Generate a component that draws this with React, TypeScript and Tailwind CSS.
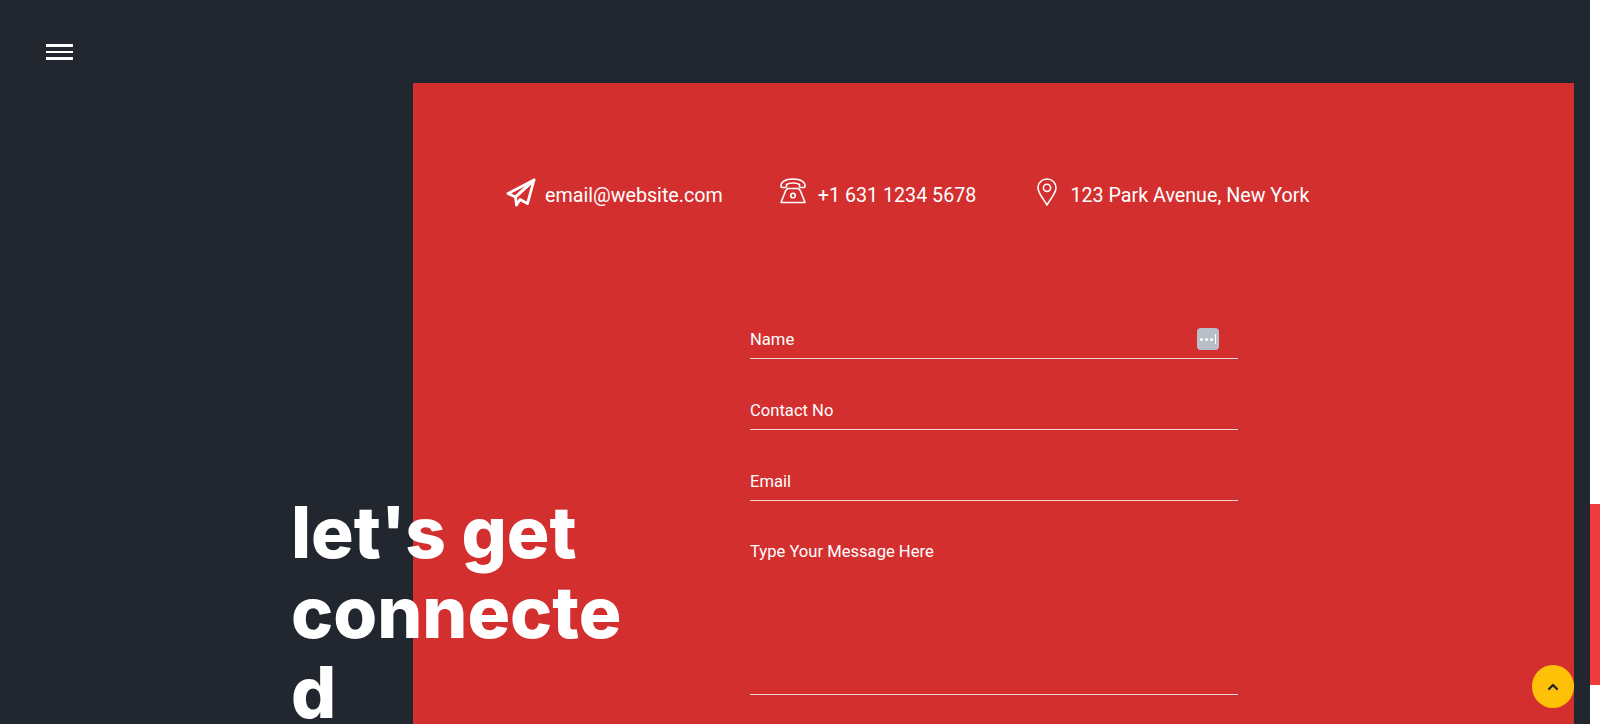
import { ChevronUp } from "lucide-react";

function PlaneIcon() {
  return (
    <svg width="30" height="30" viewBox="0 0 30 30" fill="none" stroke="white" strokeWidth="2.8" strokeLinejoin="round" strokeLinecap="round">
      <path d="M28 2 2 15.500l7.500 3.500L28 2Z" />
      <path d="M28 2 9.500 19l1 8 3.500-5.500 7.500 4L28 2Z" />
    </svg>
  );
}

function PhoneIcon() {
  return (
    <svg width="28" height="26" viewBox="0 0 28 26" fill="none" stroke="white" strokeWidth="1.6" strokeLinejoin="round">
      <path d="M2 8.500C1.500 4 6 1 14 1s12.500 3 12 7.500c0 .8-.6 1-1.200 1h-3.300c-.6 0-1-.4-1-1V6.500c-1.500-1-3.800-1.500-6.500-1.500s-5 .5-6.500 1.500v2c0 .6-.4 1-1 1H3.200C2.600 9.500 2 9.300 2 8.500Z" />
      <path d="M8.500 10.500h11l2 2.500 4.500 11.500H2L6.500 13l2-2.500Z" />
      <circle cx="14" cy="17.500" r="2.300" />
    </svg>
  );
}

function PinIcon() {
  return (
    <svg width="20" height="28" viewBox="0 0 20 28" fill="none" stroke="white" strokeWidth="1.6" strokeLinejoin="round">
      <path d="M10 27C6.500 20.500 1 15.500 1 9.800 1 4.800 5 1 10 1s9 3.800 9 8.800C19 15.500 13.500 20.500 10 27Z" />
      <circle cx="10" cy="9.800" r="3.600" />
    </svg>
  );
}

function ContactItem({ icon, text, gap }: { icon: React.ReactNode; text: string; gap: string }) {
  return (
    <div className={`flex items-start ${gap}`}>
      {icon}
      <span className="pt-[3px] text-[19.700px] leading-[30px] text-white">{text}</span>
    </div>
  );
}

function Field({ label, showKey }: { label: string; showKey?: boolean }) {
  return (
    <div className="relative mb-[27px] border-b border-white/80">
      <input
        placeholder={label}
        className="h-[43px] w-full bg-transparent pt-[5px] text-[16.600px] text-white outline-none placeholder:text-white"
      />
      {showKey && (
        <span className="absolute right-[19px] top-[13px] flex h-[22px] w-[22px] items-center justify-center gap-[2px] rounded-[4px] bg-[#b8bfc9]">
          <i className="h-[3px] w-[3px] rounded-full bg-white" />
          <i className="h-[3px] w-[3px] rounded-full bg-white" />
          <i className="h-[3px] w-[3px] rounded-full bg-white" />
          <i className="h-[10px] w-[1px] bg-white" />
        </span>
      )}
    </div>
  );
}

export default function App() {
  return (
    <div className="relative flex h-[724px] overflow-hidden bg-white font-['Roboto',sans-serif]">
      <div className="min-w-0 flex-1 bg-[#22262e] pt-[44px]">
        <button className="ml-[46px] flex w-[27px] flex-col gap-[4px]">
          <span className="h-[3px] bg-white" />
          <span className="h-[2px] bg-white" />
          <span className="h-[3px] bg-white" />
        </button>

        <section className="ml-[413px] mr-[16px] mt-[23px] h-[800px] bg-[#d32f2f] pt-[95px]">
          <div className="flex pl-[93px]">
            <ContactItem icon={<PlaneIcon />} text="email@website.com" gap="gap-[9px]" />
            <div className="ml-[56px]">
              <ContactItem icon={<PhoneIcon />} text="+1 631 1234 5678" gap="gap-[11px]" />
            </div>
            <div className="ml-[61px]">
              <ContactItem icon={<PinIcon />} text="123 Park Avenue, New York" gap="gap-[13px]" />
            </div>
          </div>

          <div className="mt-[102px] flex">
            <h1 className="ml-[-122px] mt-[179px] w-[459px] shrink-0 pr-[110px] font-['Inter',sans-serif] text-[71px] font-extrabold leading-[80px] break-words text-white">
              let's get connected
            </h1>
            <form className="mt-[2px] w-[488px] shrink-0">
              <Field label="Name" showKey />
              <Field label="Contact No" />
              <Field label="Email" />
              <textarea
                placeholder="Type Your Message Here"
                className="block h-[167px] w-full resize-none border-b border-white/80 bg-transparent pt-[12px] text-[16.600px] text-white outline-none placeholder:text-white"
              />
            </form>
          </div>
        </section>
      </div>

      <div className="w-[10px] shrink-0 pt-[504px]">
        <div className="h-[181px] bg-[#ef3b3b]" />
      </div>

      <button className="absolute right-[26px] top-[665px] flex h-[43px] w-[42px] items-center justify-center rounded-full bg-[#ffc107] text-[#22262e]">
        <ChevronUp size={16} strokeWidth={3.5} />
      </button>
    </div>
  );
}
